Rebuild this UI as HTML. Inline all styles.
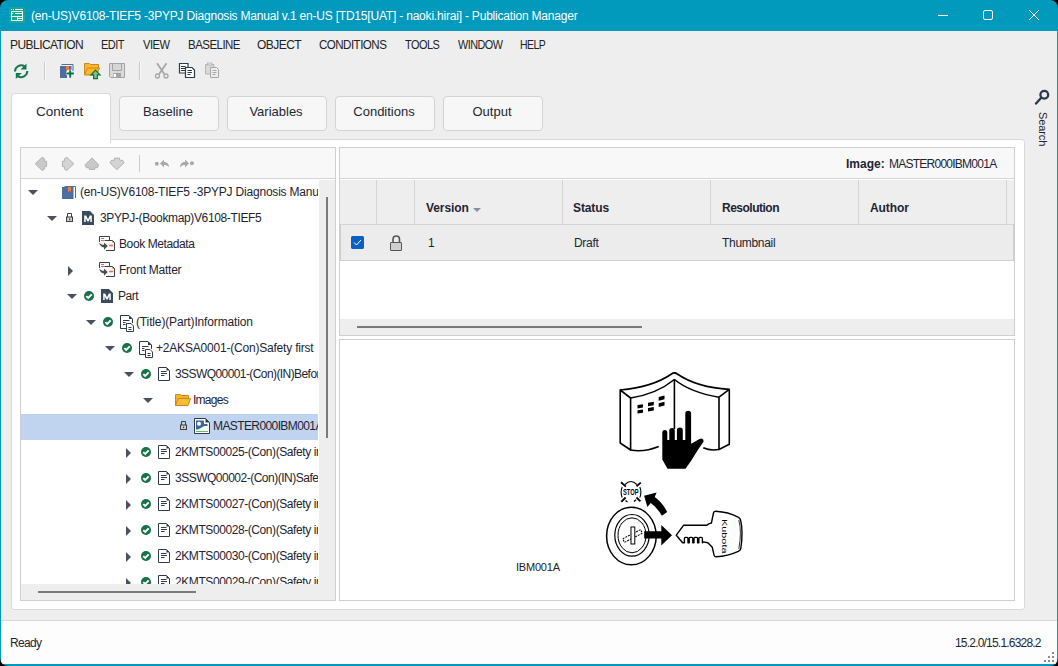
<!DOCTYPE html>
<html><head><meta charset="utf-8">
<style>
*{box-sizing:border-box;margin:0;padding:0}
html,body{width:1058px;height:666px;overflow:hidden;background:#000}
body{font-family:"Liberation Sans",sans-serif;color:#1e2433;position:relative}
.a{position:absolute}
#win{left:0;top:0;width:1058px;height:666px;background:#0199bc;border-radius:8px;overflow:hidden}
#client{left:1px;top:31px;width:1056px;height:633px;background:#eeeeee;overflow:hidden}
.ttl{left:31px;top:9px;font-size:12px;color:#fff;white-space:nowrap;letter-spacing:-0.2px}
.menu span{position:absolute;top:7px;font-size:12px;white-space:nowrap;letter-spacing:-0.55px;color:#222}
.tab{border:1px solid #d3d3d3;border-radius:4px;background:#f7f7f7;font-size:13px;text-align:center;line-height:30px;padding-right:2px;color:#222838}
.panel{background:#fff;border:1px solid #d9d9d9;border-radius:3px}
.box{border:1px solid #cfcfcf;background:#fff}
.tree div.r{position:absolute;left:0;height:26px;width:300px;white-space:nowrap}
.tt{position:absolute;top:7px;font-size:12px;letter-spacing:-0.25px;color:#1e2433;white-space:nowrap}
.tri{position:absolute;width:0;height:0}
.tri.d{border-left:5px solid transparent;border-right:5px solid transparent;border-top:5px solid #4a5160;top:10px}
.tri.rt{border-top:5px solid transparent;border-bottom:5px solid transparent;border-left:5px solid #4a5160;top:8px}
.chk{position:absolute;top:8px;width:11px;height:11px;border-radius:50%;background:#1a7a4c}
.th{position:absolute;top:21px;font-size:12px;font-weight:bold;color:#1e2433;letter-spacing:-0.1px}
.td{position:absolute;top:13px;font-size:12px;color:#1e2433;letter-spacing:-0.3px}
.vd{position:absolute;top:0;width:1px;height:44px;background:#d4d4d4}
</style></head><body>

<svg width="0" height="0" style="position:absolute">
<defs>
 <symbol id="i-book" viewBox="0 0 14 15">
  <path d="M2.5 1.5H13.5V13" fill="none" stroke="#4a6fa0" stroke-width="1"/>
  <rect x="0" y="2" width="11.5" height="12" fill="#4a6fa0"/>
  <path d="M6 2H9V7L7.5 5.8L6 7Z" fill="#f47b3a"/>
 </symbol>
 <symbol id="i-m" viewBox="0 0 12 14">
  <path d="M0 0H8L12 4V14H0Z" fill="#3b4b5e"/>
  <path d="M2.2 11V4.5H4.2L6 8.2L7.8 4.5H9.8V11H8.3V7.2L6.6 10.5H5.4L3.7 7.2V11Z" fill="#fff"/>
 </symbol>
 <symbol id="i-lock" viewBox="0 0 7 9">
  <path d="M1.5 4.5V0.5H5.5V4.5" fill="none" stroke="#3d3d3d" stroke-width="1"/>
  <rect x="0.5" y="4" width="6" height="4.5" fill="#d0d0d0" stroke="#3d3d3d" stroke-width="1"/>
  <rect x="3" y="5.5" width="1.2" height="1.6" fill="#3d3d3d"/>
 </symbol>
 <symbol id="i-chk" viewBox="0 0 10 10">
  <circle cx="5" cy="5" r="5" fill="#17714b"/>
  <path d="M2.3 5.1L4.2 7L7.7 3.3" fill="none" stroke="#fff" stroke-width="1.9"/>
 </symbol>
 <symbol id="i-meta" viewBox="0 0 16 15">
  <path d="M0.5 6V0.5H10.5V4.5" fill="none" stroke="#3b3f47" stroke-width="1"/>
  <path d="M2 2.5H5M2 4.5H5" stroke="#f26a3a" stroke-width="1"/>
  <path d="M5.5 4.5H13.5L15.5 6.5V14.5H7" fill="#fff" stroke="#3b3f47" stroke-width="1"/>
  <path d="M13.5 4.5L15.5 6.5H13.5Z" fill="#3b3f47"/>
  <path d="M10 9.5H14" stroke="#f26a3a" stroke-width="1.6"/>
  <path d="M0.3 6.5C0.6 9.5 2.5 11.3 5 11.5V13.8L8.8 10L5 6.5V8.8C3 8.8 1.5 8 0.3 6.5Z" fill="#4a4d55"/>
 </symbol>
 <symbol id="i-docdoc" viewBox="0 0 14 17">
  <path d="M6.5 13.5H0.5V0.5H9L12.5 4V8" fill="none" stroke="#2f3b4a" stroke-width="1"/>
  <path d="M9 0.5V4H12.5Z" fill="#2f3b4a"/>
  <path d="M3 5.5H9.5M3 7.5H5.5M3 9.5H5.5" stroke="#2f3b4a" stroke-width="1"/>
  <path d="M6.5 8.5H11L13.5 11V16.5H6.5Z" fill="#fff" stroke="#2f3b4a" stroke-width="1"/>
  <path d="M8.5 12.5H11.5M8.5 14.5H11.5" stroke="#2f3b4a" stroke-width="1"/>
 </symbol>
 <symbol id="i-doc" viewBox="0 0 12 14">
  <path d="M0.5 0.5H8.5L11.5 3.5V13.5H0.5Z" fill="#fff" stroke="#2f3b4a" stroke-width="1"/>
  <path d="M8.5 0.5V3.5H11.5Z" fill="#2f3b4a"/>
  <path d="M3 4.5H8.5M3 6.5H9M3 8.5H6.5" stroke="#2f3b4a" stroke-width="1"/>
 </symbol>
 <symbol id="i-folder" viewBox="0 0 16 12">
  <path d="M0.5 11.5V0.5H5.5L6.5 1.5H13.5V4" fill="#f8b42c" stroke="#c98a1c" stroke-width="1"/>
  <path d="M0.5 11.5L3 4.5H15.5L13 11.5Z" fill="#fcbb34" stroke="#c98a1c" stroke-width="1"/>
 </symbol>
 <symbol id="i-img" viewBox="0 0 16 16">
  <path d="M0.5 0.5H11.5L15.5 4.5V15.5H0.5Z" fill="#fff" stroke="#2f3b4a" stroke-width="1"/>
  <path d="M11.5 0.5V4.5H15.5Z" fill="#2f3b4a"/>
  <path d="M2 2.5H10V6H13.5V8H10.5L4 11.5H2Z" fill="#3f6699"/>
  <circle cx="5" cy="5.8" r="2" fill="#fff"/>
  <path d="M2 13.5H14" stroke="#5cc05c" stroke-width="1"/>
 </symbol>
</defs></svg>
<div id="win" class="a">
  <!-- title icon -->
  <div class="a" style="left:9px;top:7px;width:16px;height:16px;background:#19a897;border-radius:1px"></div>
  <div class="a ttl">(en-US)V6108-TIEF5 -3PYPJ Diagnosis Manual v.1 en-US [TD15[UAT] - naoki.hirai] - Publication Manager</div>

  <div id="client" class="a"></div>
  <!-- status bar -->
  <div class="a" style="left:1px;top:620px;width:1056px;height:1px;background:#d8d8d8"></div>
  <div class="a" style="left:1px;top:621px;width:1056px;height:43px;background:#fdfdfd;border-radius:0 0 7px 7px"></div>
  <svg class="a" style="left:1040px;top:648px" width="16" height="16" viewBox="1040 648 16 16"><g fill="#8c8c8c"><rect x="1052" y="652" width="2" height="2"/><rect x="1048" y="656" width="2" height="2"/><rect x="1052" y="656" width="2" height="2"/><rect x="1044" y="660" width="2" height="2"/><rect x="1048" y="660" width="2" height="2"/><rect x="1052" y="660" width="2" height="2"/></g></svg>
  <div class="a" style="left:10px;top:636px;font-size:12px;color:#1e2433;letter-spacing:-0.7px">Ready</div>
  <div class="a" style="left:955px;top:636px;font-size:12px;color:#1e2433;letter-spacing:-0.8px">15.2.0/15.1.6328.2</div>
  <!-- menu -->
  <div class="a menu" style="left:0;top:31px">
    <span style="left:10px">PUBLICATION</span><span style="left:101px;transform:scaleX(0.915);transform-origin:0 0">EDIT</span><span style="left:143px;transform:scaleX(0.93);transform-origin:0 0">VIEW</span><span style="left:187.5px;transform:scaleX(0.958);transform-origin:0 0">BASELINE</span><span style="left:257px">OBJECT</span><span style="left:319.3px;transform:scaleX(0.964);transform-origin:0 0">CONDITIONS</span><span style="left:405.3px;transform:scaleX(0.91);transform-origin:0 0">TOOLS</span><span style="left:457.5px;transform:scaleX(0.902);transform-origin:0 0">WINDOW</span><span style="left:520px;transform:scaleX(0.87);transform-origin:0 0">HELP</span>
  </div>
  <!-- tabs -->
  <div class="a tab" style="left:119px;top:96px;width:100px;height:35px">Baseline</div>
  <div class="a tab" style="left:227px;top:96px;width:100px;height:35px">Variables</div>
  <div class="a tab" style="left:335px;top:96px;width:100px;height:35px">Conditions</div>
  <div class="a tab" style="left:443px;top:96px;width:100px;height:35px">Output</div>
  <div class="a panel" style="left:11px;top:139px;width:1014px;height:471px;border-top-left-radius:0"></div>
  <div class="a" style="left:11px;top:93px;width:100px;height:50px;background:#fff;border:1px solid #d9d9d9;border-bottom:none;border-radius:4px 4px 0 0"></div>
  <div class="a" style="left:12px;top:139px;width:98px;height:3px;background:#fff"></div>
  <div class="a" style="left:36px;top:104px;font-size:13.5px;color:#222838">Content</div>
  <!-- tree panel -->
  <div class="a box" style="left:20px;top:147px;width:316px;height:454px;background:#fff"></div>
  <div class="a" style="left:21px;top:148px;width:314px;height:31px;background:#f8f8f8;border-bottom:1px solid #d4d4d4"></div>
  <div class="a" style="left:319px;top:180px;width:16px;height:404px;background:#eeeeee"></div>
  <div class="a" style="left:326px;top:197px;width:2px;height:241px;background:#7a7a7a"></div>
  <div class="a" style="left:21px;top:584px;width:314px;height:16px;background:#eeeeee"></div>
  <div class="a" style="left:38px;top:591px;width:158px;height:2px;background:#7a7a7a"></div>
  <div class="a" style="left:139px;top:155px;width:1px;height:17px;background:#cccccc"></div>
<div class="a" style="left:21px;top:180px;width:297px;height:404px;overflow:hidden">
<div class="r" style="position:absolute;left:0;top:0px;width:298px;height:26px;">
<div class="tri d" style="left:7px;top:10px"></div>
<svg class="a" style="left:41px;top:5px" width="14" height="15"><use href="#i-book"/></svg>
<div class="tt" style="left:59px;top:5px;letter-spacing:-0.2px">(en-US)V6108-TIEF5 -3PYPJ Diagnosis Manual v.1 en-US</div>
</div>
<div class="r" style="position:absolute;left:0;top:26px;width:298px;height:26px;">
<div class="tri d" style="left:26px;top:10px"></div>
<svg class="a" style="left:45px;top:7px" width="7" height="9"><use href="#i-lock"/></svg>
<svg class="a" style="left:61px;top:5px" width="12" height="14"><use href="#i-m"/></svg>
<div class="tt" style="left:79px;top:5px;letter-spacing:-0.36px">3PYPJ-(Bookmap)V6108-TIEF5</div>
</div>
<div class="r" style="position:absolute;left:0;top:52px;width:298px;height:26px;">
<svg class="a" style="left:78px;top:4px" width="16" height="15"><use href="#i-meta"/></svg>
<div class="tt" style="left:98px;top:5px;letter-spacing:-0.4px">Book Metadata</div>
</div>
<div class="r" style="position:absolute;left:0;top:78px;width:298px;height:26px;">
<div class="tri rt" style="left:47px;top:8px"></div>
<svg class="a" style="left:78px;top:4px" width="16" height="15"><use href="#i-meta"/></svg>
<div class="tt" style="left:98px;top:5px;letter-spacing:-0.25px">Front Matter</div>
</div>
<div class="r" style="position:absolute;left:0;top:104px;width:298px;height:26px;">
<div class="tri d" style="left:46px;top:10px"></div>
<svg class="a" style="left:63px;top:7px" width="10" height="10"><use href="#i-chk"/></svg>
<svg class="a" style="left:80px;top:5px" width="12" height="14"><use href="#i-m"/></svg>
<div class="tt" style="left:97px;top:5px;letter-spacing:-0.5px">Part</div>
</div>
<div class="r" style="position:absolute;left:0;top:130px;width:298px;height:26px;">
<div class="tri d" style="left:65px;top:10px"></div>
<svg class="a" style="left:82px;top:7px" width="10" height="10"><use href="#i-chk"/></svg>
<svg class="a" style="left:99px;top:5px" width="14" height="17"><use href="#i-docdoc"/></svg>
<div class="tt" style="left:115px;top:5px;letter-spacing:-0.14px">(Title)(Part)Information</div>
</div>
<div class="r" style="position:absolute;left:0;top:156px;width:298px;height:26px;">
<div class="tri d" style="left:84px;top:10px"></div>
<svg class="a" style="left:101px;top:7px" width="10" height="10"><use href="#i-chk"/></svg>
<svg class="a" style="left:118px;top:5px" width="14" height="17"><use href="#i-docdoc"/></svg>
<div class="tt" style="left:135px;top:5px;letter-spacing:-0.2px">+2AKSA0001-(Con)Safety first</div>
</div>
<div class="r" style="position:absolute;left:0;top:182px;width:298px;height:26px;">
<div class="tri d" style="left:103px;top:10px"></div>
<svg class="a" style="left:120px;top:7px" width="10" height="10"><use href="#i-chk"/></svg>
<svg class="a" style="left:137px;top:5px" width="12" height="14"><use href="#i-doc"/></svg>
<div class="tt" style="left:154px;top:5px;letter-spacing:-0.58px">3SSWQ00001-(Con)(IN)Before operating</div>
</div>
<div class="r" style="position:absolute;left:0;top:208px;width:298px;height:26px;">
<div class="tri d" style="left:122px;top:10px"></div>
<svg class="a" style="left:154px;top:6px" width="16" height="12"><use href="#i-folder"/></svg>
<div class="tt" style="left:172px;top:5px;letter-spacing:-0.73px">Images</div>
</div>
<div class="r" style="position:absolute;left:0;top:234px;width:298px;height:26px; background:#c1d4ef;">
<svg class="a" style="left:159px;top:7px" width="7" height="9"><use href="#i-lock"/></svg>
<svg class="a" style="left:173px;top:4px" width="16" height="16"><use href="#i-img"/></svg>
<div class="tt" style="left:192px;top:5px;letter-spacing:-0.6px">MASTER000IBM001A</div>
</div>
<div class="r" style="position:absolute;left:0;top:260px;width:298px;height:26px;">
<div class="tri rt" style="left:105px;top:8px"></div>
<svg class="a" style="left:120px;top:7px" width="10" height="10"><use href="#i-chk"/></svg>
<svg class="a" style="left:137px;top:5px" width="12" height="14"><use href="#i-doc"/></svg>
<div class="tt" style="left:154px;top:5px;letter-spacing:-0.42px">2KMTS00025-(Con)(Safety instructions)</div>
</div>
<div class="r" style="position:absolute;left:0;top:286px;width:298px;height:26px;">
<div class="tri rt" style="left:105px;top:8px"></div>
<svg class="a" style="left:120px;top:7px" width="10" height="10"><use href="#i-chk"/></svg>
<svg class="a" style="left:137px;top:5px" width="12" height="14"><use href="#i-doc"/></svg>
<div class="tt" style="left:154px;top:5px;letter-spacing:-0.5px">3SSWQ00002-(Con)(IN)Safe operation</div>
</div>
<div class="r" style="position:absolute;left:0;top:312px;width:298px;height:26px;">
<div class="tri rt" style="left:105px;top:8px"></div>
<svg class="a" style="left:120px;top:7px" width="10" height="10"><use href="#i-chk"/></svg>
<svg class="a" style="left:137px;top:5px" width="12" height="14"><use href="#i-doc"/></svg>
<div class="tt" style="left:154px;top:5px;letter-spacing:-0.42px">2KMTS00027-(Con)(Safety instructions)</div>
</div>
<div class="r" style="position:absolute;left:0;top:338px;width:298px;height:26px;">
<div class="tri rt" style="left:105px;top:8px"></div>
<svg class="a" style="left:120px;top:7px" width="10" height="10"><use href="#i-chk"/></svg>
<svg class="a" style="left:137px;top:5px" width="12" height="14"><use href="#i-doc"/></svg>
<div class="tt" style="left:154px;top:5px;letter-spacing:-0.42px">2KMTS00028-(Con)(Safety instructions)</div>
</div>
<div class="r" style="position:absolute;left:0;top:364px;width:298px;height:26px;">
<div class="tri rt" style="left:105px;top:8px"></div>
<svg class="a" style="left:120px;top:7px" width="10" height="10"><use href="#i-chk"/></svg>
<svg class="a" style="left:137px;top:5px" width="12" height="14"><use href="#i-doc"/></svg>
<div class="tt" style="left:154px;top:5px;letter-spacing:-0.42px">2KMTS00030-(Con)(Safety instructions)</div>
</div>
<div class="r" style="position:absolute;left:0;top:390px;width:298px;height:26px;">
<div class="tri rt" style="left:105px;top:8px"></div>
<svg class="a" style="left:120px;top:7px" width="10" height="10"><use href="#i-chk"/></svg>
<svg class="a" style="left:137px;top:5px" width="12" height="14"><use href="#i-doc"/></svg>
<div class="tt" style="left:154px;top:5px;letter-spacing:-0.42px">2KMTS00029-(Con)(Safety instructions)</div>
</div>
</div>
  <!-- right top panel -->
  <div class="a box" style="left:339px;top:147px;width:676px;height:189px"></div>
  <div class="a" style="left:340px;top:148px;width:674px;height:31px;background:#f8f8f8;border-bottom:1px solid #d4d4d4"></div>
  <div class="a" style="left:846px;top:157px;font-size:12px;font-weight:bold;color:#1e2433">Image:</div>
  <div class="a" style="left:889px;top:157px;font-size:12px;color:#1e2433;letter-spacing:-0.75px">MASTER000IBM001A</div>
  <div class="a" style="left:340px;top:180px;width:674px;height:45px;background:#eeeeee;border-bottom:1px solid #d4d4d4"></div>
  <div class="vd" style="left:376px;top:180px"></div>
  <div class="vd" style="left:414px;top:180px"></div>
  <div class="vd" style="left:562px;top:180px"></div>
  <div class="vd" style="left:710px;top:180px"></div>
  <div class="vd" style="left:858px;top:180px"></div>
  <div class="vd" style="left:1006px;top:180px"></div>
  <div class="a" style="left:340px;top:201px;font-size:12px;font-weight:bold"><span class="th" style="left:86px;top:0">Version</span><span class="th" style="left:233px;top:0">Status</span><span class="th" style="left:382px;top:0;letter-spacing:-0.5px">Resolution</span><span class="th" style="left:530px;top:0">Author</span></div>
  <div class="a" style="left:473px;top:208px;width:0;height:0;border-left:4px solid transparent;border-right:4px solid transparent;border-top:4px solid #8a8f99"></div>
  <div class="a" style="left:340px;top:225px;width:674px;height:36px;background:#ececec;border-bottom:1px solid #d0d0d0;border-left:1px solid #d0d0d0;border-right:1px solid #d0d0d0"></div>
  <div class="a" style="left:351px;top:236px;width:13px;height:13px;background:#0b63c8;border-radius:2px"></div>
  <div class="a" style="left:428px;top:236px;font-size:12px">1</div>
  <div class="a" style="left:574px;top:236px;font-size:12px;letter-spacing:-0.3px">Draft</div>
  <div class="a" style="left:722px;top:236px;font-size:12px;letter-spacing:-0.3px">Thumbnail</div>
  <div class="a" style="left:340px;top:319px;width:674px;height:16px;background:#eeeeee"></div>
  <div class="a" style="left:357px;top:326px;width:285px;height:2px;background:#7a7a7a"></div>
  <!-- image panel -->
  <div class="a box" style="left:339px;top:339px;width:676px;height:262px"></div>
  <div class="a" style="left:516px;top:561px;font-size:11px;color:#222;letter-spacing:-0.2px">IBM001A</div>

  <!-- title controls -->
  <svg class="a" style="left:0;top:0" width="1058" height="31" viewBox="0 0 1058 31">
   <path d="M9 7H25V22.5H9Z" fill="#17a896"/>
   <path d="M11 9.5H12M13 9.5H14M15 9.5H23" stroke="#fff" stroke-width="1"/>
   <path d="M11.5 11.5H22.5V20.5H11.5Z M11.5 16.5H22.5 M17.5 16.5V20.5 M17.5 18.5H22.5" fill="none" stroke="#fff" stroke-width="1"/>
   <path d="M11.5 13.5H13M15 13.5H22.5" stroke="#fff" stroke-width="1"/>
   <path d="M938 15.5H948" stroke="#fff" stroke-width="1"/>
   <rect x="983.5" y="10.5" width="9" height="9" rx="1.5" fill="none" stroke="#fff" stroke-width="1"/>
   <path d="M1029 10L1039 20M1039 10L1029 20" stroke="#fff" stroke-width="1"/>
  </svg>
  <!-- main toolbar -->
  <svg class="a" style="left:0;top:58px" width="240" height="28" viewBox="0 58 240 28">
   <g fill="none" stroke="#17784f" stroke-width="2">
    <path d="M15 71.5A6.3 6.3 0 0 1 24.5 66.2"/>
    <path d="M27.3 71A6.3 6.3 0 0 1 17.8 76.3"/>
   </g>
   <path d="M26.5 63.5V69.5H20.5Z" fill="#17784f"/>
   <path d="M15.8 79V73H21.8Z" fill="#17784f"/>
   <rect x="44" y="62" width="1" height="18" fill="#c9c9c9"/>
   <rect x="45" y="62" width="1" height="18" fill="#fafafa"/>
   <rect x="139" y="62" width="1" height="18" fill="#c9c9c9"/>
   <rect x="140" y="62" width="1" height="18" fill="#fafafa"/>
   <!-- book plus -->
   <path d="M61.5 64.5H73V71.5" fill="none" stroke="#4a6fa0" stroke-width="1"/>
   <path d="M60 66H71.5V70H67V78H60Z" fill="#4a6fa0"/>
   <path d="M66 66H69V71L67.5 69.5L66 71Z" fill="#f47b3a"/>
   <path d="M66 73.3H74.5M70.2 69.8V78.2" stroke="#fff" stroke-width="3.5"/>
   <path d="M66.3 73.6H74M70.2 70.2V77.8" stroke="#0e6e44" stroke-width="2"/>
   <!-- folder up -->
   <path d="M84.5 75V63.5H89.5L90.5 64.5H98.5V68" fill="#fbb62c" stroke="#c8891a" stroke-width="1"/>
   <path d="M84.5 75L87.5 68H99.5L96.5 75Z" fill="#fbb62c" stroke="#c8891a" stroke-width="1"/>
   <path d="M95.5 70.2L100 74.8H97.4V78.6H93.6V74.8H91Z" fill="#7cc67c" stroke="#0e6e44" stroke-width="1.2"/>
   <!-- save -->
   <path d="M109.5 63.5H124.5V77.5H110.5L109.5 76.5Z" fill="#dadada" stroke="#a3a3a3" stroke-width="1"/>
   <path d="M112.5 63.5H121.5V70.5H112.5Z" fill="#d6d6d6" stroke="#a3a3a3" stroke-width="1"/>
   <path d="M113.5 73H121V77.5H113.5Z" fill="#a3a3a3"/>
   <rect x="114" y="74" width="2" height="3" fill="#fff"/>
   <!-- scissors -->
   <path d="M157 63.2L164.3 74M166.5 63.2L159.2 74" stroke="#a6a6a6" stroke-width="1.8"/>
   <circle cx="157.5" cy="76" r="2" fill="none" stroke="#a6a6a6" stroke-width="1.3"/>
   <circle cx="166" cy="76" r="2" fill="none" stroke="#a6a6a6" stroke-width="1.3"/>
   <!-- copy -->
   <path d="M179.5 63.5H188V73H179.5Z" fill="#fff" stroke="#2f3b4a" stroke-width="1.2"/>
   <path d="M181 66.5H185.5M181 68.5H185.5M181 70.5H185" stroke="#2f3b4a" stroke-width="1"/>
   <path d="M185.5 67.5H192L194.5 70V77.5H185.5Z" fill="#fff" stroke="#2f3b4a" stroke-width="1.2"/>
   <path d="M187.5 70.5H192M187.5 72.5H192M187.5 74.5H190.5" stroke="#2f3b4a" stroke-width="1"/>
   <!-- paste -->
   <path d="M205.5 64.5H214V74H205.5Z" fill="#d9d9d9" stroke="#b5b5b5" stroke-width="1"/>
   <rect x="207.5" y="63" width="4.5" height="2" fill="#e8e8e8" stroke="#b0b0b0" stroke-width="0.8"/>
   <path d="M210.5 67.5H216.5L218.5 69.5V77.5H210.5Z" fill="#eeeeee" stroke="#a6a6a6" stroke-width="1"/>
   <path d="M212.5 70.5H216.5M212.5 72.5H216.5M212.5 74.5H215.5" stroke="#a6a6a6" stroke-width="1"/>
  </svg>
  <!-- tree toolbar -->
  <svg class="a" style="left:21px;top:148px" width="200" height="31" viewBox="21 148 200 31">
   <g fill="#c9c9c9" stroke="#b3b3b3" stroke-width="1">
    <path d="M35.2 163.8L42.2 157.3L44.6 158.8V161.2H46.6V166.6H44.6V169L42.2 170.5Z"/>
    <path d="M73.8 163.8L66.8 157.3L64.4 158.8V161.2H62.4V166.6H64.4V169L66.8 170.5Z" fill="#d4d4d4"/>
    <path d="M92 157.9L98.7 164.9L97.4 167.7H94.8V169.4H89.2V167.7H86.3L85 164.9Z"/>
    <path d="M114.4 158.1H119.6V160.3H122.7L124 162.9L116.8 169.7L110 162.9L111.3 160.3H114.4Z" fill="#d4d4d4"/>
   </g>
   <rect x="139" y="155" width="1" height="17" fill="#cbcbcb"/>
   <g fill="#a9a9a9">
    <circle cx="156.8" cy="163.8" r="2"/>
    <path d="M160 163.5L164 159.5V162C167 162 169 164 169 167C167.5 165.5 166 165 164 165V167.5Z"/>
    <circle cx="191.9" cy="163.2" r="2"/>
    <path d="M189 163.5L185 159.5V162C182 162 180 164 180 167.5C181.5 165.5 183 165 185 165V167.5Z"/>
   </g>
  </svg>
  <!-- table checkbox and lock -->
  <svg class="a" style="left:340px;top:225px" width="80" height="35" viewBox="340 225 80 35">
   <rect x="351" y="236" width="13" height="13" rx="2.5" fill="#0a60c4"/>
   <path d="M354 242.5L356.5 245L361 240" fill="none" stroke="#fff" stroke-width="1"/>
   <path d="M393 242.5V239.3A3.2 3.2 0 0 1 399.5 239.3V242.5" fill="none" stroke="#555" stroke-width="1.6"/>
   <rect x="390.5" y="242.5" width="11" height="8" rx="0.5" fill="#cfcfcf" stroke="#555" stroke-width="1"/>
  </svg>

  <!-- illustration -->
  <svg class="a" style="left:600px;top:365px" width="150" height="210" viewBox="600 365 150 210">
   <g fill="none" stroke="#000" stroke-width="1.6" stroke-linejoin="round">
    <path d="M620.2 390C642 388 660 382 671.5 374Q674.4 371.8 677.3 374C689 382 707 388 729.3 389.4"/>
    <path d="M620.2 390V443L630.6 450V398Z"/>
    <path d="M630.6 398C650 395 664 388 674.4 379.5C685 388 700 394 719 397.2"/>
    <path d="M674.4 379.5V429"/>
    <path d="M729.3 389.4V444.3L719 449.5V397.2Z"/>
    <path d="M630.6 450C641 452 650 450 658.7 446.5"/>
    <path d="M703.3 447.8C708 450 713 450.5 719 449.5"/>
   </g>
   <g fill="#000">
    <path d="M637.5 405L643 404.2V407.6L637.5 408.4Z"/>
    <path d="M637.5 410.2L643 409.4V412.8L637.5 413.6Z"/>
    <path d="M648 402.8L653.8 401.8V405.3L648 406.3Z"/>
    <path d="M648 408L653.8 407V410.5L648 411.5Z"/>
    <path d="M658.7 397L664.5 395.5V399.3L658.7 400.8Z"/>
    <path d="M658.7 403.2L664.5 401.7V405.5L658.7 407Z"/>
    <path d="M662.3 432.5Q662.3 430 664.8 430Q667.3 430 667.3 432.5V440H669.3V430.5Q669.3 428 671.9 428Q674.8 428 674.8 430.5V440H676.9V430Q676.9 427.5 679.8 427.5Q682.8 427.5 682.8 430V440H685.3V413.5Q685.3 410.7 688.2 410.7Q691.1 410.7 691.1 413.5V443.8L699.5 439Q703.5 437.5 703.6 441.5L697.5 450.5L691 461L685.5 468.8H667.5L662.3 459.5Z"/>
   </g>
   <!-- stop -->
   <g fill="none" stroke="#000" stroke-width="1.1">
    <path d="M625 484.5Q631 478.5 636.8 484.5"/>
    <path d="M622.2 487Q620 492 622.2 497.5"/>
    <path d="M639.8 487Q642 492 639.8 497.5"/>
   </g>
   <path d="M621 482.3L625.9 486.6M640.8 482.6L636.5 486.2M621.3 501.8L625.6 497.5M640.4 501.4L636.5 497.5" stroke="#000" stroke-width="1.8"/>
   <path d="M625.5 500.5L627.5 502M634 501.5L636 499.8" stroke="#000" stroke-width="1.4"/>
   <text x="630.8" y="494.9" font-family="Liberation Sans" font-size="8.4" font-weight="bold" text-anchor="middle" textLength="15.5" lengthAdjust="spacingAndGlyphs">STOP</text>
   <path d="M644.1 495.8L656.6 492.5L654.7 497.1Q662 502 667.2 512L661.9 515.7Q657 507.5 650.7 503.1L647.4 507.1Z" fill="#000"/>
   <!-- ignition -->
   <g fill="none" stroke="#000">
    <ellipse cx="631.4" cy="536" rx="24.8" ry="28.8" stroke-width="1.5"/>
    <ellipse cx="632" cy="535.3" rx="17.2" ry="20.8" stroke-width="1.2"/>
    <ellipse cx="632" cy="535.3" rx="14" ry="17.5" stroke-width="1"/>
    <rect x="622.5" y="534" width="20" height="4" transform="rotate(-27 632.5 536)" fill="#fff" stroke-width="1" stroke-dasharray="2 1"/>
    <rect x="631" y="527" width="3.8" height="17" fill="#fff" stroke-width="1"/>
   </g>
   <path d="M644.2 531.3H661.3V525L672 535.3L661.3 545.6V538.6H644.2Z" fill="#000"/>
   <!-- key -->
   <path d="M676.3 535.2L683.5 525.3H706.9L708.7 523.9L711.4 523L713.6 512.5Q714.2 511.2 716 511.3Q728 512 738.5 517.3Q740.3 518.3 740.7 520.5Q743.3 532 740.8 548.5Q740.3 550.5 738.3 551.3Q728 556 716 556.8Q714.3 556.8 714 555L712.3 547.3L709.6 544.6L707.8 542.8L703.3 541.9L702.4 542.8V538.4Q702.4 537.4 701.4 537.4H699.8Q698.8 537.4 698.8 538.4V542.8L697.6 542.8V538.4Q697.6 537.4 696.6 537.4H695.0Q694 537.4 694 538.4V542.8L692.8 542.8V538.4Q692.8 537.4 691.8 537.4H690.2Q689.2 537.4 689.2 538.4V542.8L688 542.8V538.4Q688 537.4 687.0 537.4H685.4Q684.4 537.4 684.4 538.4V542.8H682.6Z" fill="#fff" stroke="#000" stroke-width="1.4" stroke-linejoin="round"/>
   <path d="M738.8 520Q742 532 738.8 548.8" fill="none" stroke="#000" stroke-width="0.8"/>
   <text x="0" y="0" font-family="Liberation Sans" font-size="8" fill="#000" transform="translate(722.3 519) rotate(90)" textLength="34.5" lengthAdjust="spacingAndGlyphs">Kubota</text>
  </svg>
  <!-- search -->
  <svg class="a" style="left:1030px;top:86px" width="24" height="22" viewBox="1030 86 24 22">
   <circle cx="1044.3" cy="94.7" r="3.9" fill="none" stroke="#2b3a4c" stroke-width="2.3"/>
   <path d="M1041 98L1036 103.5" stroke="#2b3a4c" stroke-width="2.4" stroke-linecap="round"/>
  </svg>

  <!-- search text -->
  <div class="a" style="left:1030px;top:112px;font-size:11px;letter-spacing:-0.1px;color:#1e2433;transform-origin:0 0;transform:translate(18.5px,0) rotate(90deg)">Search</div>
</div>
</body></html>
